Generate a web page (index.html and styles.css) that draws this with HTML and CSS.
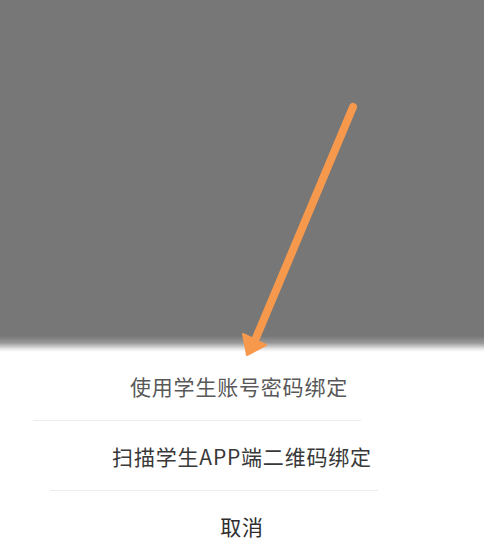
FILE: index.html
```html
<!DOCTYPE html>
<html lang="zh-CN">
<head>
<meta charset="utf-8">
<link rel="stylesheet" href="styles.css">
</head>
<body>
<div class="screen">
  <div class="mask"></div>
  <div class="sheet">
    <div class="row row-first">使用学生账号密码绑定</div>
    <div class="divider divider-a"></div>
    <div class="row row-second">扫描学生APP端二维码绑定</div>
    <div class="divider divider-b"></div>
    <div class="row row-cancel">取消</div>
  </div>
  <svg class="arrow" width="484" height="555" viewBox="0 0 484 555">
    <line x1="353" y1="107" x2="256" y2="338" stroke="#f7994c" stroke-width="8" stroke-linecap="round"/>
    <polygon points="243,334 266,345 247,355" fill="#f7994c" stroke="#f7994c" stroke-width="2" stroke-linejoin="round"/>
  </svg>
</div>
</body>
</html>
```
FILE: styles.css
```css
html, body {
  margin: 0;
  padding: 0;
}
body {
  width: 484px;
  height: 555px;
  overflow: hidden;
  font-family: "Noto Sans CJK SC", "Noto Sans", sans-serif;
  background: #ffffff;
}
.screen {
  position: relative;
  width: 484px;
  height: 555px;
  display: flex;
  flex-direction: column;
}
.mask {
  height: 352px;
  flex: none;
  background: linear-gradient(to bottom, #777777 0, #777777 336px, #9a9a9a 343px, #e8e8e8 349px, #ffffff 352px);
}
.sheet {
  flex: 1;
  display: flex;
  flex-direction: column;
  background: #ffffff;
}
.row {
  height: 68px;
  display: flex;
  align-items: center;
  justify-content: center;
  font-size: 21px;
  font-weight: 400;
  letter-spacing: 0.8px;
  padding-top: 0;
  box-sizing: border-box;
}
.row-first {
  color: #585858;
  padding-right: 6px;
}
.row-second {
  color: #383838;
  height: 69px;
}
.row-cancel {
  color: #2e2e2e;
  height: 70px;
}
.divider {
  height: 1px;
  background: #ececec;
}
.divider-a {
  margin-left: 33px;
  width: 328px;
}
.divider-b {
  margin-left: 50px;
  width: 328px;
}
.arrow {
  position: absolute;
  left: 0;
  top: 0;
  pointer-events: none;
}
```
